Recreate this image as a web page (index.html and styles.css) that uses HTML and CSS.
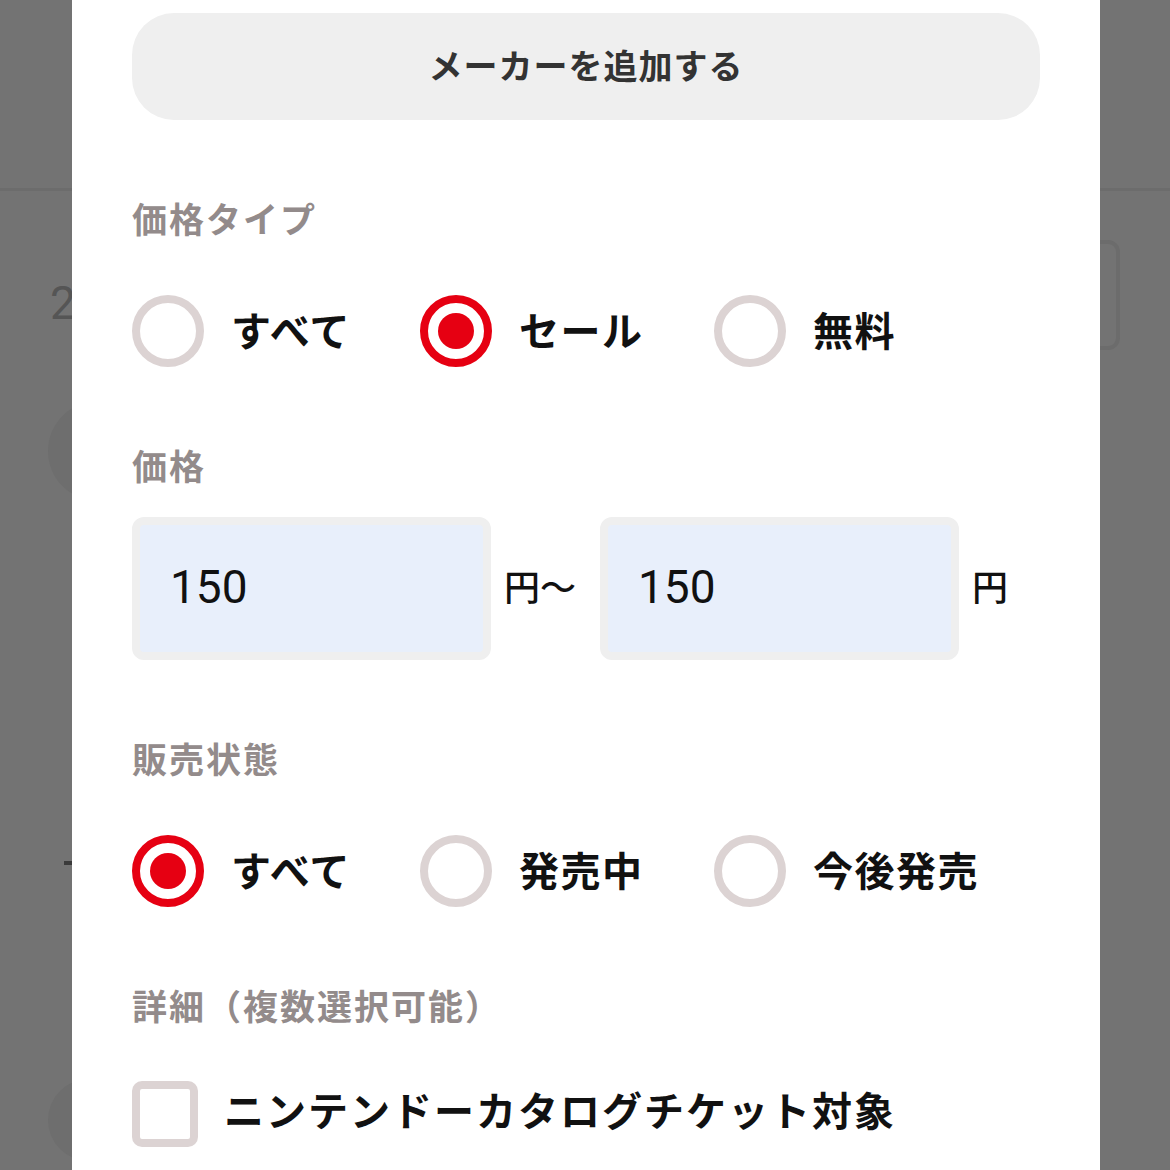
FILE: index.html
```html
<!DOCTYPE html>
<html lang="ja">
<head>
<meta charset="utf-8">
<title>絞り込み</title>
<link rel="stylesheet" href="styles.css">
</head>
<body>
<div class="page">
  <header class="page-header"></header>
  <div class="page-row">
    <span class="page-num">2</span>
    <span class="page-box"></span>
  </div>
  <div class="page-pill"></div>
  <div class="page-dash"></div>
  <div class="page-pill page-pill-bottom"></div>
</div>

<div class="modal">
  <button class="add-maker"><span class="add-maker-text">メーカーを追加する</span></button>

  <section class="section">
    <h3 class="section-title">価格タイプ</h3>
    <div class="radio-group">
      <label class="radio"><span class="radio-mark"></span><span class="radio-text">すべて</span></label>
      <label class="radio"><span class="radio-mark checked"></span><span class="radio-text">セール</span></label>
      <label class="radio"><span class="radio-mark"></span><span class="radio-text">無料</span></label>
    </div>
  </section>

  <section class="section">
    <h3 class="section-title">価格</h3>
    <div class="price-row">
      <div class="price-input">150</div>
      <span class="unit unit-from">円〜</span>
      <div class="price-input">150</div>
      <span class="unit">円</span>
    </div>
  </section>

  <section class="section">
    <h3 class="section-title">販売状態</h3>
    <div class="radio-group">
      <label class="radio"><span class="radio-mark checked"></span><span class="radio-text">すべて</span></label>
      <label class="radio"><span class="radio-mark"></span><span class="radio-text">発売中</span></label>
      <label class="radio"><span class="radio-mark"></span><span class="radio-text">今後発売</span></label>
    </div>
  </section>

  <section class="section">
    <h3 class="section-title">詳細（複数選択可能）</h3>
    <label class="checkbox"><span class="checkbox-mark"></span><span class="checkbox-text">ニンテンドーカタログチケット対象</span></label>
  </section>
</div>
</body>
</html>
```

FILE: styles.css
```css
* { box-sizing: border-box; }

html, body {
  margin: 0;
  padding: 0;
  height: 100%;
  overflow: hidden;
}

body {
  background: #737373;
  font-family: "Noto Sans CJK JP", "Noto Sans", sans-serif;
  position: relative;
}

/* faint background page behind the overlay */
.page {
  width: 1170px;
  height: 1170px;
}

.page-header {
  height: 191px;
  border-bottom: 3px solid #6c6c6c;
}

.page-row {
  display: flex;
  justify-content: space-between;
  align-items: flex-start;
  padding: 49px 50px 0 50px;
  height: 200px;
}

.page-num {
  font-family: Roboto, "Liberation Sans", sans-serif;
  font-size: 46px;
  line-height: 1;
  color: #555555;
  margin-top: 40px;
}

.page-box {
  width: 72px;
  height: 110px;
  border: 4px solid #6c6c6c;
  border-radius: 12px;
}

.page-pill {
  margin: 10px 0 0 48px;
  width: 200px;
  height: 100px;
  border-radius: 50px;
  background: #6e6e6e;
}

.page-dash {
  margin: 360px 0 0 64px;
  width: 12px;
  height: 4px;
  background: #3a3a3a;
}

.page-pill-bottom {
  margin: 214px 0 0 48px;
  height: 82px;
}

/* modal */
.modal {
  position: absolute;
  top: 0;
  left: 72px;
  width: 1028px;
  height: 1170px;
  background: #ffffff;
  padding: 13px 60px 0 60px;
}

.add-maker {
  display: flex;
  align-items: center;
  justify-content: center;
  width: 908px;
  height: 107px;
  border: none;
  border-radius: 42px;
  background: #efefef;
  color: #333333;
  font-family: "Noto Sans CJK JP", sans-serif;
  font-weight: 700;
  font-size: 34px;
  letter-spacing: 1px;
  padding: 0;
}

.add-maker-text {
  padding-bottom: 5px;
}

.section {
  margin-top: 74px;
}

.section-title {
  margin: 0;
  height: 48px;
  line-height: 48px;
  font-size: 35px;
  font-weight: 700;
  color: #938b8b;
  letter-spacing: 2px;
}

.radio-group {
  margin-top: 53px;
  display: grid;
  grid-template-columns: 288px 294px 1fr;
}

.radio {
  display: flex;
  align-items: center;
  height: 72px;
}

.radio-mark {
  flex: none;
  width: 72px;
  height: 72px;
  border-radius: 50%;
  border: 8px solid #dcd3d3;
  display: flex;
  align-items: center;
  justify-content: center;
}

.radio-mark.checked {
  border-color: #e60012;
}

.radio-mark.checked::after {
  content: "";
  width: 36px;
  height: 36px;
  border-radius: 50%;
  background: #e60012;
}

.radio-text {
  margin-left: 27px;
  padding-bottom: 5px;
  font-size: 40px;
  font-weight: 700;
  color: #111111;
  letter-spacing: 1.5px;
}

.price-row {
  margin-top: 28px;
  display: flex;
  align-items: center;
}

.price-input {
  width: 359px;
  height: 143px;
  border: 8px solid #efefef;
  border-radius: 12px;
  background: #e8effb;
  padding-left: 30px;
  padding-bottom: 4px;
  display: flex;
  align-items: center;
  font-family: Roboto, "Liberation Sans", sans-serif;
  font-size: 46px;
  color: #111111;
}

.unit {
  font-size: 36px;
  font-weight: 500;
  color: #111111;
  margin-left: 13px;
  padding-bottom: 8px;
}

.unit-from {
  margin-right: 24px;
}

.checkbox {
  margin-top: 51px;
  display: flex;
  align-items: center;
}

.checkbox-mark {
  flex: none;
  width: 66px;
  height: 66px;
  border: 8px solid #dcd3d3;
  border-radius: 10px;
}

.checkbox-text {
  margin-left: 26px;
  padding-bottom: 9px;
  font-size: 40px;
  font-weight: 700;
  color: #111111;
  letter-spacing: 2px;
}
```
